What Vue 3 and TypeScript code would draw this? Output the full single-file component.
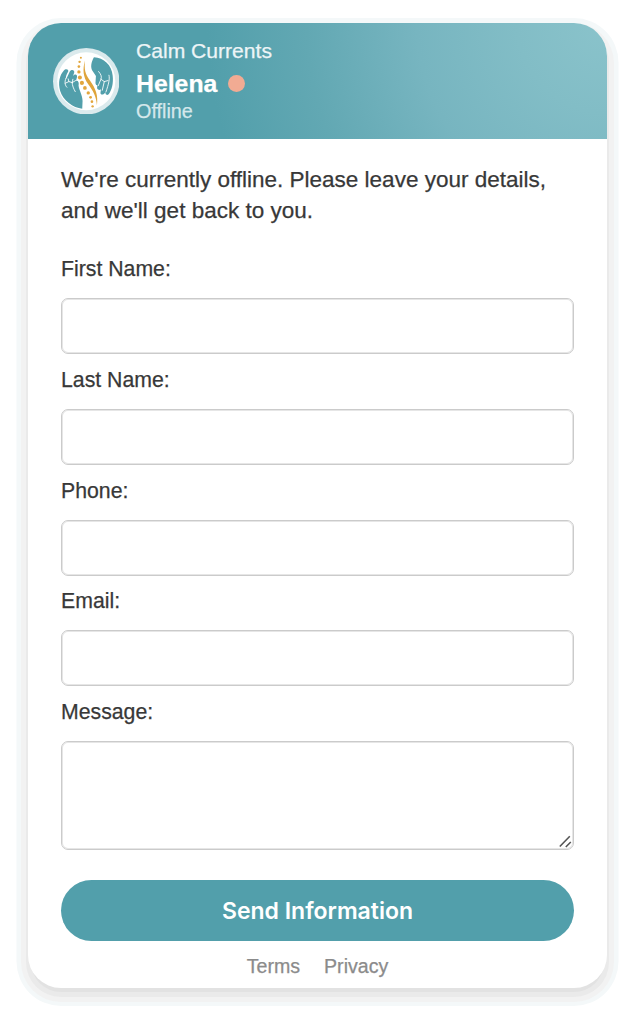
<script setup lang="ts">
interface Field {
  id: string
  label: string
  type: string
}

const fields: Field[] = [
  { id: 'first', label: 'First Name:', type: 'text' },
  { id: 'last', label: 'Last Name:', type: 'text' },
  { id: 'phone', label: 'Phone:', type: 'tel' },
  { id: 'email', label: 'Email:', type: 'email' },
]

const beads: [number, number, number][] = [
  [97, 45, 3], [93, 57, 3.6], [91, 71, 4], [91, 87, 5], [94, 104, 6],
  [100, 120, 6.2], [109, 135, 5.6], [119, 150, 5], [126, 163, 4.2],
  [130, 176, 4], [132, 190, 3.5],
]
</script>

<template>
  <main class="page">
    <section class="card">
      <header class="head">
        <svg class="logo" viewBox="13.5 15.5 199 199" aria-hidden="true">
          <circle cx="113" cy="115" r="99.5" fill="#dbeaed" />
          <circle cx="113" cy="115" r="87" fill="#fff" />
          <g fill="#529fab">
            <path d="M46 83C50 77 61 78 59 86C54 94 52 100 52 107L54 107L63 87C67 78 79 80 77 89L73 101C78 91 88 95 85 104L82 114C89 112 92 119 90 128C91 141 102 157 102 174L101 197C73 194 44 173 35 144C28 119 33 98 46 83Z" />
            <path d="M136 43C165 44 190 67 192 98C195 122 189 143 180 154C175 158 169 155 171 149L168 151C163 158 153 155 156 147L157 139C151 144 143 139 146 131L146 127C141 127 140 121 141 114L142 99L133 86C124 74 128 57 136 43Z" />
          </g>
          <g fill="none" stroke="#fff" stroke-width="2.6" stroke-linecap="round" stroke-linejoin="round">
            <path d="M52 106C47 119 50 128 55 133M50 121L61 116L71 119M61 116L59 108M71 119L73 109M71 119C71 128 75 137 80 146M71 119L81 113" />
            <path d="M150 86C157 94 160 101 157 109L149 128M157 109L167 116L161 142M167 116L178 113M181 97C184 108 180 123 172 147" />
          </g>
          <path d="M109 53C107 79 109 93 124 113C141 137 149 157 145 187C143 160 134 145 119 124C103 102 102 80 109 53Z" fill="#dfa43b" />
          <circle v-for="(b, i) in beads" :key="i" :cx="b[0]" :cy="b[1]" :r="b[2]" fill="#e2a63d" />
        </svg>
        <div class="who">
          <div class="brand">Calm Currents</div>
          <div class="name">Helena<span class="dot"></span></div>
          <div class="state">Offline</div>
        </div>
      </header>
      <form class="body" @submit.prevent>
        <p class="intro">We're currently offline. Please leave your details,<br />and we'll get back to you.</p>
        <div v-for="f in fields" :key="f.id" class="field">
          <label :for="f.id">{{ f.label }}</label>
          <input :id="f.id" :type="f.type" />
        </div>
        <div class="field">
          <label for="message">Message:</label>
          <div class="area">
            <textarea id="message"></textarea>
            <svg class="grip" viewBox="0 0 14 14" aria-hidden="true">
              <path d="M0.8 11.5L10.8 1.3M6.8 12L11.8 7" stroke="#555" stroke-width="1.6" fill="none" />
            </svg>
          </div>
        </div>
        <button type="submit">Send Information</button>
        <nav class="links"><a>Terms</a><a>Privacy</a></nav>
      </form>
    </section>
  </main>
</template>

<style>
body {
  margin: 0;
  background: #fff;
}
</style>

<style scoped>
.page {
  box-sizing: border-box;
  height: 1024px;
  padding: 23px 33px 36px 28px;
  overflow: hidden;
  font-family: "Liberation Sans", Arial, sans-serif;
  color: #383838;
  -webkit-text-stroke: 0.25px currentColor;
}
.card {
  height: 965px;
  border-radius: 33px;
  background: #fff;
  box-shadow:
    0 7px 0 -3px #e2e2e2,
    0 7px 0 2px #eaeaea,
    0 7px 0 7px #f2f2f2,
    0 6.5px 0 11.5px #f4f8f9;
}
.head {
  box-sizing: border-box;
  height: 116px;
  padding: 0 0 0 24.5px;
  display: flex;
  align-items: center;
  gap: 17px;
  border-radius: 33px 33px 0 0;
  background: radial-gradient(circle at 100% 0, #8ac3cb 0, #82bdc6 90px, #77b5c0 190px, #62a8b3 300px, #529fab 400px);
}
.logo {
  width: 66.5px;
  height: 66.5px;
  flex: none;
}
.who {
  display: flex;
  flex-direction: column;
  padding-bottom: 7px;
  white-space: nowrap;
}
.brand {
  font-size: 21.1px;
  line-height: 34px;
  color: #edf5f7;
}
.name {
  display: flex;
  align-items: center;
  font-size: 24.8px;
  line-height: 32px;
  font-weight: 700;
  color: #fff;
}
.dot {
  width: 17px;
  height: 17px;
  margin-left: 11px;
  border-radius: 50%;
  background: #f1ab93;
}
.state {
  font-size: 19.8px;
  line-height: 22px;
  color: #d5e8eb;
}
.body {
  padding: 25px 33px 0;
}
.intro {
  margin: 0 0 26px;
  font-size: 22.5px;
  line-height: 31px;
  white-space: nowrap;
}
.field {
  height: 110.8px;
}
label {
  display: block;
  height: 46px;
  font-size: 21.25px;
  line-height: 35.4px;
}
input,
textarea {
  display: block;
  box-sizing: border-box;
  width: 513px;
  height: 56px;
  margin: 0;
  padding: 0 14px;
  border: 1px solid #cbcbcb;
  border-radius: 7px;
  box-shadow: inset 0 0 0 1px #e6e6e6;
  background: #fff;
  font: inherit;
  font-size: 21px;
  outline: none;
}
textarea {
  height: 109px;
  padding: 12px 14px;
  resize: none;
}
.area {
  position: relative;
}
.grip {
  position: absolute;
  right: 1px;
  bottom: 1px;
  width: 14px;
  height: 14px;
}
button {
  display: block;
  width: 513px;
  height: 61px;
  margin: 73.8px 0 0;
  padding: 0;
  border: 0;
  border-radius: 31px;
  background: #529fab;
  color: #fff;
  font-family: Inter, sans-serif;
  font-size: 23px;
  font-weight: 600;
  line-height: 62px;
  -webkit-text-stroke: 0;
}
.links {
  display: flex;
  justify-content: center;
  gap: 24px;
  padding-top: 14px;
  font-size: 19.6px;
  line-height: 22px;
  color: #8b8b8b;
}
</style>
